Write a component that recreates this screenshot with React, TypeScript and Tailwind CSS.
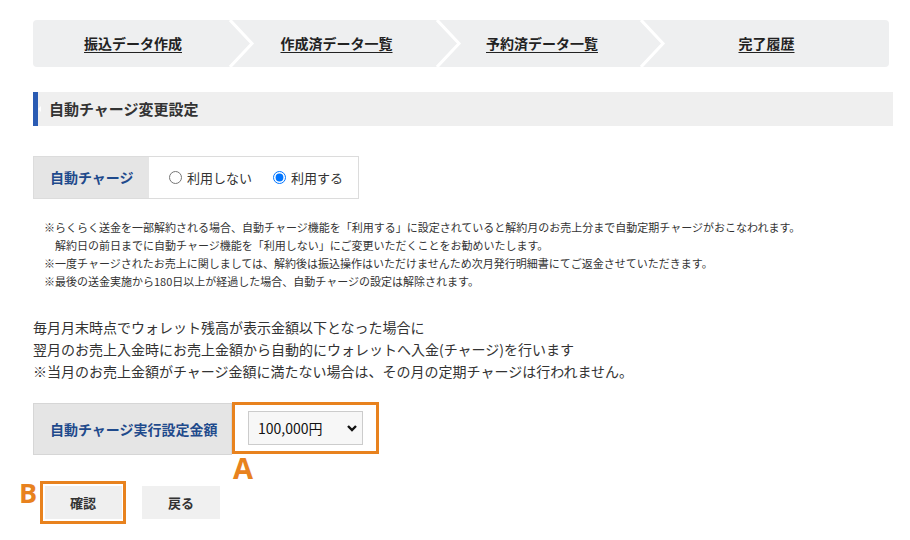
import React, { useState } from 'react';

const font = { fontFamily: '"Noto Sans CJK JP", "Noto Sans", sans-serif' };

const steps = ['振込データ作成', '作成済データ一覧', '予約済データ一覧', '完了履歴'];

const notes = [
  '※らくらく送金を一部解約される場合、自動チャージ機能を「利用する」に設定されていると解約月のお売上分まで自動定期チャージがおこなわれます。',
  '\u3000解約日の前日までに自動チャージ機能を「利用しない」にご変更いただくことをお勧めいたします。',
  '※一度チャージされたお売上に関しましては、解約後は振込操作はいただけませんため次月発行明細書にてご返金させていただきます。',
  '※最後の送金実施から180日以上が経過した場合、自動チャージの設定は解除されます。',
];

function Chevron() {
  return (
    <svg className="absolute right-[-22px] top-0 z-10" width="26" height="47" viewBox="0 0 26 47">
      <polyline points="1,0 23,23.5 1,47" fill="none" stroke="#ffffff" strokeWidth="3" />
    </svg>
  );
}

export default function App() {
  const [useCharge, setUseCharge] = useState('on');

  return (
    <div className="w-[910px] h-[540px] bg-white text-[#333] overflow-hidden pt-[20px]" style={font}>
      {/* Step bar */}
      <div className="ml-[33px] w-[856px] h-[47px] rounded bg-[#eeeff0] flex overflow-hidden">
        {steps.map((s, i) => (
          <div
            key={s}
            className={`relative flex items-center justify-center ${i < 3 ? 'w-[204px]' : 'flex-1'}`}
            style={i === 0 ? { width: 200 } : i === 1 ? { width: 207 } : undefined}
          >
            <a href="#" className="text-[14px] font-bold text-[#222] underline underline-offset-[3px]">
              {s}
            </a>
            {i < 3 && <Chevron />}
          </div>
        ))}
      </div>

      {/* Heading */}
      <div className="relative mt-[25px] ml-[33px] w-[860px] h-[34px] bg-[#efefef] border-l-[5px] border-[#2a5bb3] flex items-center pl-[11px]">
        <span className="absolute left-0 top-[14px] w-0 h-0 border-y-[3px] border-y-transparent border-r-[3px] border-r-white" />
        <h2 className="text-[15px] font-bold text-[#333]">自動チャージ変更設定</h2>
      </div>

      {/* Radio table */}
      <div className="mt-[30px] ml-[33px] w-[326px] h-[43px] flex border border-[#dcdcdc]">
        <div className="w-[115px] bg-[#e5e5e5] flex items-center pl-[16px] text-[14px] font-bold text-[#1f4a8c]">
          自動チャージ
        </div>
        <div className="flex-1 bg-white flex items-center pl-[20px] gap-[21px] text-[13px] text-[#333]">
          <label className="flex items-center gap-[5px]">
            <input
              type="radio"
              name="charge"
              checked={useCharge === 'off'}
              onChange={() => setUseCharge('off')}
              className="w-[13px] h-[13px] m-0"
            />
            利用しない
          </label>
          <label className="flex items-center gap-[5px]">
            <input
              type="radio"
              name="charge"
              checked={useCharge === 'on'}
              onChange={() => setUseCharge('on')}
              className="w-[13px] h-[13px] m-0"
            />
            利用する
          </label>
        </div>
      </div>

      {/* Notes */}
      <div className="mt-[19px] pl-[44px] text-[11px] leading-[18px] text-[#333]">
        {notes.map((n) => (
          <p key={n} className="whitespace-pre">{n}</p>
        ))}
      </div>

      {/* Description */}
      <div className="mt-[26px] pl-[33px] text-[14px] leading-[22px] text-[#333]">
        <p>毎月月末時点でウォレット残高が表示金額以下となった場合に</p>
        <p>翌月のお売上入金時にお売上金額から自動的にウォレットへ入金(チャージ)を行います</p>
        <p>※当月のお売上金額がチャージ金額に満たない場合は、その月の定期チャージは行われません。</p>
      </div>

      {/* Amount row */}
      <div className="mt-[20px] ml-[33px] flex items-start">
        <div className="w-[199px] h-[52px] mt-[1px] bg-[#e5e5e5] border border-[#d6d6d6] flex items-center pl-[16px] text-[14px] font-bold text-[#1f4a8c]">
          自動チャージ実行設定金額
        </div>
        <div className="w-[147px] h-[52px] border-[3px] border-[#e8821e] flex items-center pl-[13px]">
          <div className="w-[115px] h-[34px] bg-[#f7f7f7] border border-[#cccccc] flex items-center justify-between pl-[9px] pr-[4px] text-[14px] text-[#111]">
            <span>100,000円</span>
            <svg width="12" height="8" viewBox="0 0 12 8">
              <polyline points="2,2 6,6 10,2" fill="none" stroke="#111" strokeWidth="2.4" />
            </svg>
          </div>
        </div>
      </div>
      <div className="ml-[233px] text-[29px] leading-[26px] font-bold text-[#e8821e]" style={{ fontFamily: '"Open Sans", sans-serif' }}>
        A
      </div>

      {/* Buttons */}
      <div className="relative mt-[0px] ml-[40px] flex items-center gap-[16px]">
        <span
          className="absolute left-[-21px] top-[0px] text-[27px] leading-[24px] font-bold text-[#e8821e]"
          style={{ fontFamily: '"Open Sans", sans-serif' }}
        >
          B
        </span>
        <div className="w-[86px] h-[43px] border-[3px] border-[#e8821e] flex items-center justify-center">
          <button className="w-[77px] h-[33px] bg-[#efefef] text-[13px] font-bold text-[#333]">確認</button>
        </div>
        <button className="w-[78px] h-[33px] bg-[#f0f0f0] text-[13px] font-bold text-[#333]">戻る</button>
      </div>
    </div>
  );
}
